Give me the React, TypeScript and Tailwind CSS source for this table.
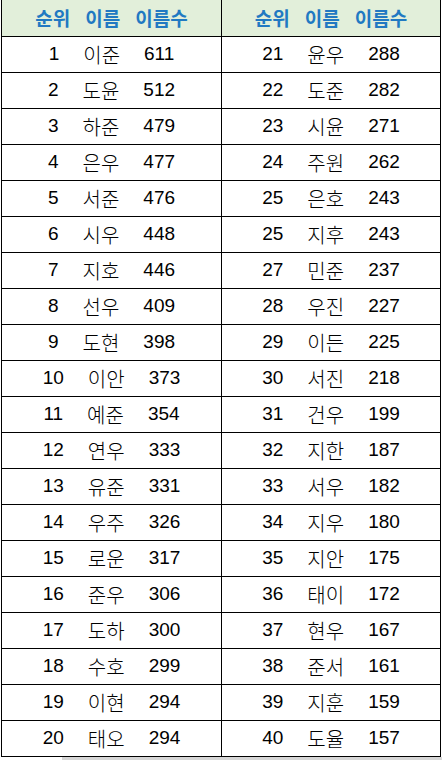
import React from 'react';

type Row = [string, string, string];

const left: Row[] = [
  ['1', '이준', '611'], ['2', '도윤', '512'], ['3', '하준', '479'], ['4', '은우', '477'],
  ['5', '서준', '476'], ['6', '시우', '448'], ['7', '지호', '446'], ['8', '선우', '409'],
  ['9', '도현', '398'], ['10', '이안', '373'], ['11', '예준', '354'], ['12', '연우', '333'],
  ['13', '유준', '331'], ['14', '우주', '326'], ['15', '로운', '317'], ['16', '준우', '306'],
  ['17', '도하', '300'], ['18', '수호', '299'], ['19', '이현', '294'], ['20', '태오', '294'],
];

const right: Row[] = [
  ['21', '윤우', '288'], ['22', '도준', '282'], ['23', '시윤', '271'], ['24', '주원', '262'],
  ['25', '은호', '243'], ['25', '지후', '243'], ['27', '민준', '237'], ['28', '우진', '227'],
  ['29', '이든', '225'], ['30', '서진', '218'], ['31', '건우', '199'], ['32', '지한', '187'],
  ['33', '서우', '182'], ['34', '지우', '180'], ['35', '지안', '175'], ['36', '태이', '172'],
  ['37', '현우', '167'], ['38', '준서', '161'], ['39', '지훈', '159'], ['40', '도율', '157'],
];

const Column = ({ rows, last }: { rows: Row[]; last?: boolean }) => (
  <div className={last ? 'flex flex-col' : 'flex flex-col border-r border-black'}>
    <div className="h-[37px] flex items-center justify-center gap-[15px] bg-[#e2efda] border-b border-black text-[19px] font-bold text-[#2179c2] font-['Noto_Sans_CJK_KR',sans-serif]">
      <span>순위</span>
      <span>이름</span>
      <span>이름수</span>
    </div>
    {rows.map(([rank, name, count], i) => (
      <div
        key={i}
        className={
          i === rows.length - 1
            ? 'h-[35px] flex items-center justify-center text-[19px] text-black'
            : 'h-9 flex items-center justify-center border-b border-black text-[19px] text-black'
        }
      >
        <span className="font-['Liberation_Sans',sans-serif]">{rank}</span>
        <span className="ml-[24px] text-[20px] font-['Noto_Sans_CJK_KR',sans-serif] font-light leading-none">{name}</span>
        <span className="ml-[24px] font-['Liberation_Sans',sans-serif]">{count}</span>
      </div>
    ))}
  </div>
);

export default function App() {
  return (
    <div className="w-[442px] h-[760px] bg-white overflow-hidden">
      <div className="ml-px w-[440px] grid grid-cols-[220px_1fr] border-x border-b border-black">
        <Column rows={left} />
        <Column rows={right} last />
      </div>
      <div className="ml-[62px] h-[3px] bg-[#d6d6d6]" />
    </div>
  );
}
